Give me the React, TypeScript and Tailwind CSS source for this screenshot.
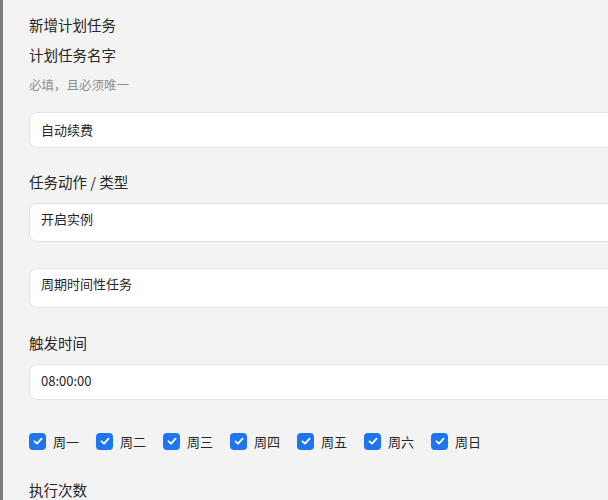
import React from "react";

const font = { fontFamily: '"Noto Sans CJK SC", "Noto Sans", sans-serif' };

function Check() {
  return (
    <span className="w-[17px] h-[17px] rounded-[4px] bg-[#1f75f0] flex items-center justify-center shrink-0">
      <svg width="12" height="12" viewBox="0 0 12 12" fill="none">
        <path d="M2.5 6.3 L5 8.6 L9.6 3.6" stroke="white" strokeWidth="1.8" strokeLinecap="round" strokeLinejoin="round" />
      </svg>
    </span>
  );
}

const days = ["周一", "周二", "周三", "周四", "周五", "周六", "周日"];

export default function App() {
  return (
    <div className="w-[608px] h-[500px] overflow-hidden flex bg-[#f3f3f3] text-[#262626]" style={font}>
      <div className="w-[3px] shrink-0 bg-[#7b7b7b]" />
      <div className="flex flex-col pl-[26px] w-[640px] shrink-0">
        <div className="mt-[15px] h-[20px] leading-[20px] text-[14.5px]">新增计划任务</div>
        <div className="mt-[10px] h-[20px] leading-[20px] text-[14.5px]">计划任务名字</div>
        <div className="mt-[11px] h-[18px] leading-[18px] text-[12.5px] text-[#8f8f8f]">必填，且必须唯一</div>
        <div className="mt-[18px] h-[37px] bg-white border border-[#e2e2e2] rounded-[8px] flex items-center pl-[11px] text-[13px]">自动续费</div>
        <div className="mt-[24px] h-[20px] leading-[20px] text-[14.5px]">任务动作 / 类型</div>
        <div className="mt-[11px] h-[40px] bg-white border border-[#e2e2e2] rounded-[8px] pl-[11px] pt-[6px] leading-[18px] text-[13px]">开启实例</div>
        <div className="mt-[26px] h-[40px] bg-white border border-[#e2e2e2] rounded-[8px] pl-[11px] pt-[6px] leading-[18px] text-[13px]">周期时间性任务</div>
        <div className="mt-[25px] h-[20px] leading-[20px] text-[14.5px]">触发时间</div>
        <div className="mt-[11px] h-[37px] bg-white border border-[#e2e2e2] rounded-[8px] flex items-center pl-[11px] pb-[2px] text-[13px]">08:00:00</div>
        <div className="mt-[33px] h-[17px] flex items-center">
          {days.map((d) => (
            <div key={d} className="w-[67px] flex items-center gap-[7px] shrink-0">
              <Check />
              <span className="text-[13px] leading-[17px]">{d}</span>
            </div>
          ))}
        </div>
        <div className="mt-[30px] h-[20px] leading-[20px] text-[14.5px]">执行次数</div>
      </div>
    </div>
  );
}
